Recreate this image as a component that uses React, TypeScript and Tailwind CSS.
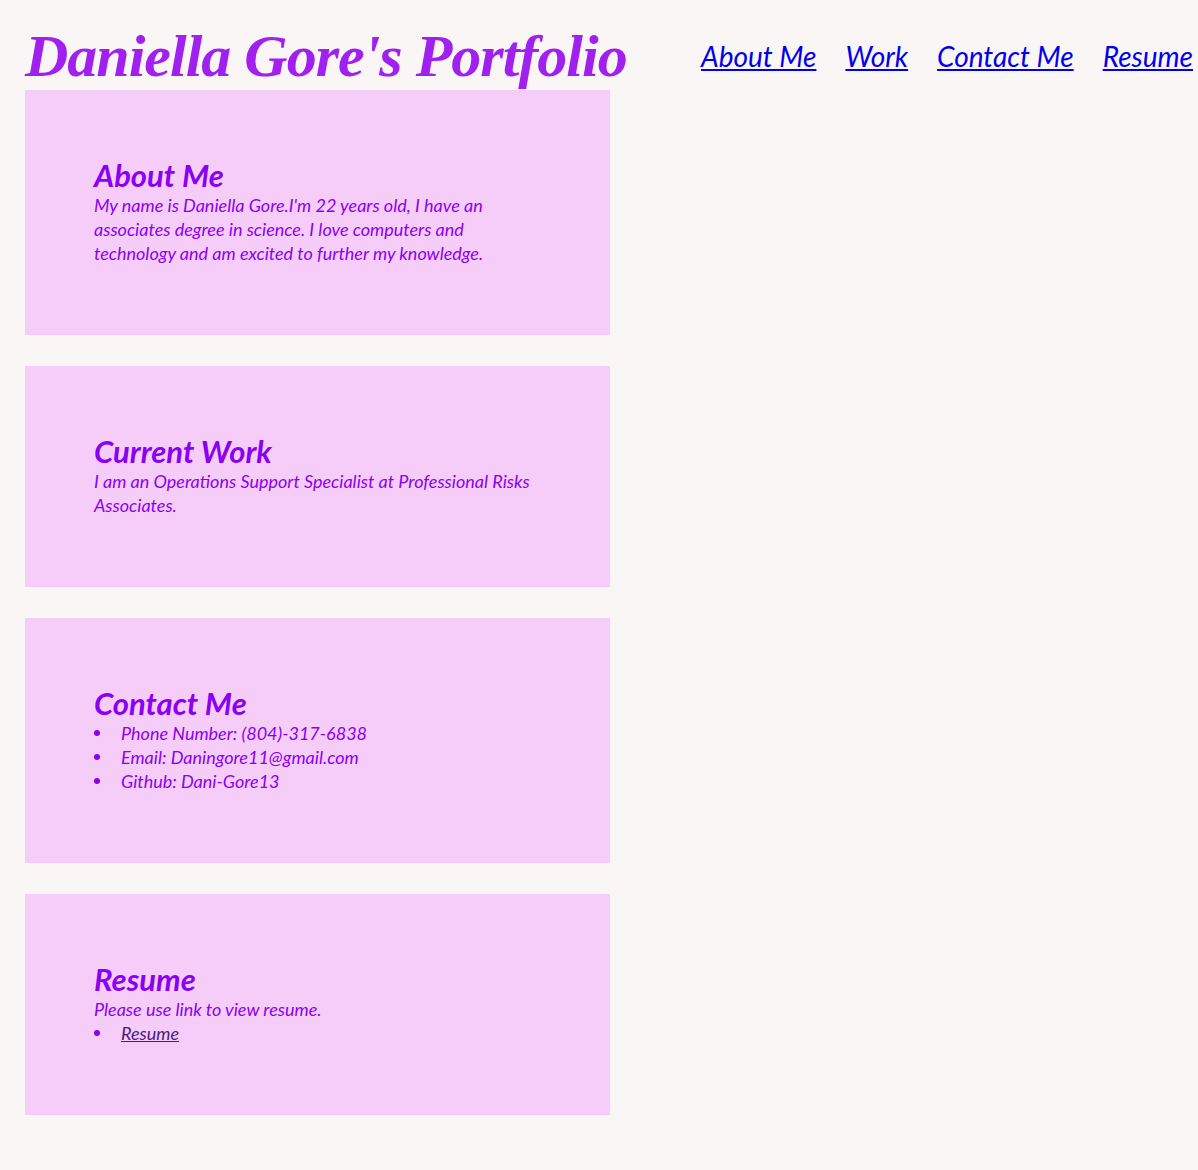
const sans = "font-['Lato','Open_Sans',sans-serif]";

const Card = ({ title, children }: { title: string; children: React.ReactNode }) => (
  <section className="w-[585px] bg-[#f6cdf8] px-[69px] pt-[68px] pb-[70px]">
    <h2 className={`${sans} text-[31px] leading-[35px] font-bold italic text-[#8a00f5]`}>{title}</h2>
    <div className={`${sans} text-[18px] leading-[24px] italic text-[#8a00f5]`}>{children}</div>
  </section>
);

const Bullet = ({ children }: { children: React.ReactNode }) => (
  <li className="flex items-center">
    <span className="w-[27px] shrink-0">
      <span className="block w-[6px] h-[6px] rounded-full bg-[#8a00f5]" />
    </span>
    <span>{children}</span>
  </li>
);

const App = () => {
  return (
    <div className="min-h-[1170px] bg-[#faf6f5] overflow-hidden">
      <header className="flex items-start justify-between pl-[25px] pt-[22px] pr-[5px]">
        <h1 className="font-['Liberation_Serif',serif] text-[60px] leading-[68px] tracking-[-1px] font-bold italic text-[#a020f0] whitespace-nowrap">
          Daniella Gore's Portfolio
        </h1>
        <nav className={`${sans} flex gap-[29px] mt-[17px] text-[28px] leading-[34px] italic`}>
          <a href="#about" className="text-[#0000ee] underline">About Me</a>
          <a href="#work" className="text-[#0000ee] underline">Work</a>
          <a href="#contact" className="text-[#0000ee] underline">Contact Me</a>
          <a href="#resume" className="text-[#0000ee] underline">Resume</a>
        </nav>
      </header>

      <main className="flex flex-col gap-[31px] pl-[25px] pb-[56px]">
        <Card title="About Me">
          <p>
            My name is Daniella Gore.I'm 22 years old, I have an associates degree in science. I love computers and
            technology and am excited to further my knowledge.
          </p>
        </Card>
        <Card title="Current Work">
          <p>I am an Operations Support Specialist at Professional Risks Associates.</p>
        </Card>
        <Card title="Contact Me">
          <ul>
            <Bullet>Phone Number: (804)-317-6838</Bullet>
            <Bullet>Email: Daningore11@gmail.com</Bullet>
            <Bullet>Github: Dani-Gore13</Bullet>
          </ul>
        </Card>
        <Card title="Resume">
          <p>Please use link to view resume.</p>
          <ul>
            <Bullet>
              <a href="#resume" className="text-[#4a1a80] underline">Resume</a>
            </Bullet>
          </ul>
        </Card>
      </main>
    </div>
  );
};

export default App;
